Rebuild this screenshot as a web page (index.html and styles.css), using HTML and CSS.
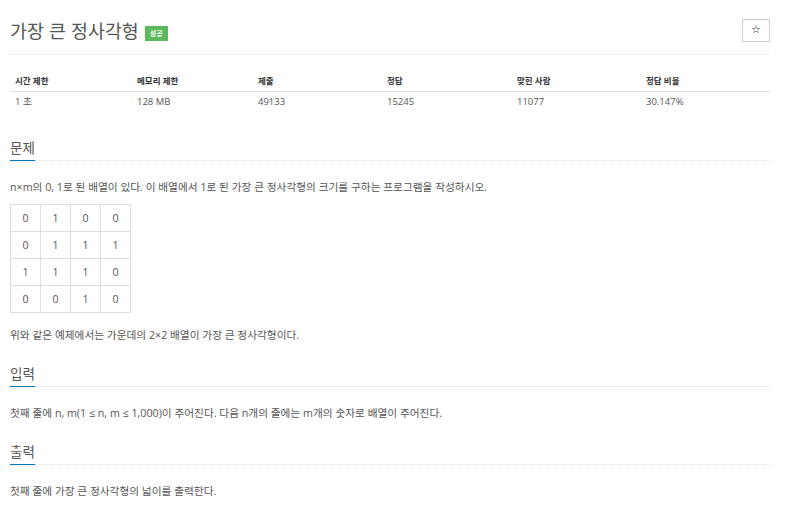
FILE: index.html
```html
<!DOCTYPE html>
<html lang="ko">
<head>
<meta charset="utf-8">
<title>가장 큰 정사각형</title>
<link rel="stylesheet" href="styles.css">
</head>
<body>
<div class="page">
  <header class="problem-header">
    <h1 class="problem-title">가장 큰 정사각형 <span class="badge">성공</span></h1>
    <button class="star-btn" type="button">☆</button>
  </header>

  <table class="info-table">
    <colgroup>
      <col class="c1"><col class="c2"><col class="c3"><col class="c4"><col class="c5"><col class="c6">
    </colgroup>
    <thead>
      <tr><th>시간 제한</th><th>메모리 제한</th><th>제출</th><th>정답</th><th>맞힌 사람</th><th>정답 비율</th></tr>
    </thead>
    <tbody>
      <tr><td>1 초</td><td>128 MB</td><td>49133</td><td>15245</td><td>11077</td><td>30.147%</td></tr>
    </tbody>
  </table>

  <section class="section first">
    <div class="section-title"><span>문제</span></div>
    <p class="text">n×m의 0, 1로 된 배열이 있다. 이 배열에서 1로 된 가장 큰 정사각형의 크기를 구하는 프로그램을 작성하시오.</p>
    <table class="grid">
      <tr><td>0</td><td>1</td><td>0</td><td>0</td></tr>
      <tr><td>0</td><td>1</td><td>1</td><td>1</td></tr>
      <tr><td>1</td><td>1</td><td>1</td><td>0</td></tr>
      <tr><td>0</td><td>0</td><td>1</td><td>0</td></tr>
    </table>
    <p class="text after-grid">위와 같은 예제에서는 가운데의 2×2 배열이 가장 큰 정사각형이다.</p>
  </section>

  <section class="section">
    <div class="section-title"><span>입력</span></div>
    <p class="text">첫째 줄에 n, m(1 ≤ n, m ≤ 1,000)이 주어진다. 다음 n개의 줄에는 m개의 숫자로 배열이 주어진다.</p>
  </section>

  <section class="section">
    <div class="section-title"><span>출력</span></div>
    <p class="text">첫째 줄에 가장 큰 정사각형의 넓이를 출력한다.</p>
  </section>
</div>
</body>
</html>
```

FILE: styles.css
```css
* { box-sizing: border-box; }

body {
  margin: 0;
  background: #fff;
  font-family: "Open Sans", "Noto Sans CJK KR", sans-serif;
  color: #555;
}

.page {
  width: 760px;
  margin-left: 10px;
}

.problem-header {
  display: flex;
  justify-content: space-between;
  align-items: center;
  height: 55px;
  padding-top: 6px;
  border-bottom: 1px solid #eee;
}

.problem-title {
  margin: 0;
  font-family: "Noto Sans CJK KR", sans-serif;
  font-weight: 400;
  font-size: 18.4px;
  line-height: 24px;
  color: #555;
  display: flex;
  align-items: center;
}

.badge {
  display: inline-block;
  margin-left: 6px;
  margin-top: 7px;
  width: 23px;
  height: 15px;
  line-height: 15px;
  text-align: center;
  background: #5cb85c;
  color: #fff;
  font-size: 7px;
  font-weight: 700;
}

.star-btn {
  width: 28px;
  height: 23px;
  padding: 0;
  border: 1px solid #ccc;
  background: #fff;
  color: #222;
  font-family: "DejaVu Sans", sans-serif;
  font-size: 11px;
  line-height: 20px;
}

.info-table {
  width: 760px;
  margin-top: 14px;
  border-collapse: collapse;
  table-layout: fixed;
}
.info-table .c1 { width: 122px; }
.info-table .c2 { width: 121px; }
.info-table .c3 { width: 129px; }
.info-table .c4 { width: 130px; }
.info-table .c5 { width: 129px; }
.info-table .c6 { width: 129px; }

.info-table th {
  text-align: left;
  font-weight: 700;
  font-size: 8.5px;
  color: #333;
  padding: 0 5px;
  height: 22px;
  border-bottom: 1px solid #ddd;
}
.info-table td {
  padding: 0 5px;
  height: 20px;
  font-size: 9.5px;
  color: #555;
}

.section { margin-top: 19px; }
.section.first { margin-top: 25px; }

.section-title {
  border-bottom: 1px dotted #ddd;
  margin-bottom: 18px;
}
.section-title span {
  display: inline-block;
  font-family: "Noto Sans CJK KR", sans-serif;
  font-size: 13.5px;
  line-height: 20px;
  padding-bottom: 3px;
  margin-bottom: -1px;
  border-bottom: 1px solid #0076c0;
  color: #555;
}

.text {
  margin: 0;
  font-size: 10.7px;
  line-height: 16px;
  color: #555;
}

.grid {
  border-collapse: collapse;
  margin-top: 9px;
  font-size: 10.5px;
}
.grid td {
  width: 30px;
  height: 27px;
  padding: 0;
  text-align: center;
  border: 1px solid #ddd;
  color: #555;
}

.after-grid { margin-top: 14px; }
```
